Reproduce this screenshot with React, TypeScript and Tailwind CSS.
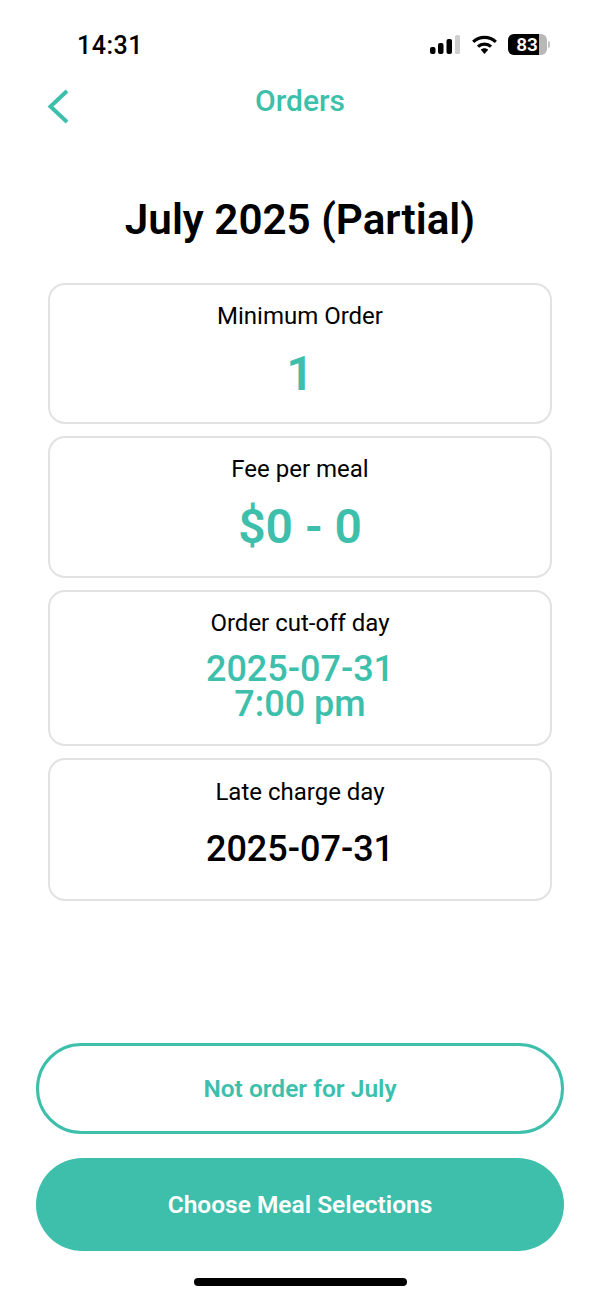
import React from 'react'

const TEAL = 'text-[#3dbfab]'

const Card = ({ label, children, className }: { label: string; children: React.ReactNode; className: string }) => (
    <div className={`w-full flex flex-col items-center rounded-[17px] border-2 border-[#e2e2e2] ${className}`}>
        <div className="text-[24px] leading-[28px] text-black">{label}</div>
        {children}
    </div>
)

const StatusIcons = () => (
    <div className="flex items-center">
        <svg width="30" height="19" viewBox="0 0 30 19">
            <rect x="0" y="12" width="5.5" height="7" rx="2" fill="#000" />
            <rect x="8" y="8" width="5.5" height="11" rx="2" fill="#000" />
            <rect x="16.5" y="4" width="5.5" height="15" rx="2" fill="#000" />
            <rect x="25" y="0" width="5" height="19" rx="1.5" fill="#cfcfcf" />
        </svg>
        <svg className="ml-[12px]" width="25" height="19" viewBox="0 0 25 19" fill="none">
            <path d="M1.2 6.8C7.5 0.9 17.5 0.9 23.8 6.8" stroke="#000" strokeWidth="3.2" />
            <path d="M6 11.6C9.5 8.4 15.5 8.4 19 11.6" stroke="#000" strokeWidth="3.2" />
            <path d="M8.8 14.8L12.5 19L16.2 14.8C14 12.8 11 12.8 8.8 14.8Z" fill="#000" />
        </svg>
        <div className="ml-[11px] flex items-center">
            <div className="w-[39px] h-[21px] rounded-[6px] bg-[#b8b8b8] overflow-hidden">
                <div className="w-[31px] h-full bg-black flex items-center justify-center pl-[7px]">
                    <span className="text-[19px] leading-none font-semibold text-white">83</span>
                </div>
            </div>
            <div className="ml-[1px] w-[2px] h-[7px] rounded-r-[2px] bg-[#c4c4c4]" />
        </div>
    </div>
)

const App = () => {
    return (
        <div className="w-[600px] h-[1299px] bg-white flex flex-col font-['Roboto',sans-serif] overflow-hidden">
            {/* status bar */}
            <div className="h-[72px] pt-[30px] pl-[77px] pr-[50px] flex items-start justify-between">
                <div className="text-[25px] leading-[32px] font-medium text-black tracking-[0.5px]">14:31</div>
                <div className="pt-[4px]"><StatusIcons /></div>
            </div>

            {/* header */}
            <div className="relative h-[58px] flex items-center justify-center">
                <svg className="absolute left-[46px] top-[16px]" width="24" height="36" viewBox="0 0 24 36" fill="none">
                    <path d="M21 3L4.5 18.5L21 34" stroke="#3dbfab" strokeWidth="4" />
                </svg>
                <div className={`text-[30px] leading-[36px] font-medium ${TEAL}`}>Orders</div>
            </div>

            <div className="mt-[64px] text-center text-[42.2px] leading-[52px] font-semibold text-black">July 2025 (Partial)</div>

            {/* cards */}
            <div className="mt-[37px] px-[48px] flex flex-col gap-[12px]">
                <Card label="Minimum Order" className="h-[141px] pt-[17px]">
                    <div className={`mt-[16px] text-[48px] leading-[56px] font-semibold ${TEAL}`}>1</div>
                </Card>
                <Card label="Fee per meal" className="h-[141.5px] pt-[17px]">
                    <div className={`mt-[16px] text-[48px] leading-[56px] font-semibold ${TEAL}`}>$0 - 0</div>
                </Card>
                <Card label="Order cut-off day" className="h-[156.5px] pt-[17px]">
                    <div className={`mt-[15px] text-[36px] leading-[35px] font-medium text-center ${TEAL}`}>
                        2025-07-31<br />7:00 pm
                    </div>
                </Card>
                <Card label="Late charge day" className="h-[143px] pt-[18px]">
                    <div className="mt-[21px] text-[36px] leading-[44px] font-medium text-black">2025-07-31</div>
                </Card>
            </div>

            {/* actions */}
            <div className="mt-auto px-[36px] flex flex-col">
                <button className={`h-[91px] pt-[2px] rounded-full border-[3px] border-[#3dbfab] bg-white text-[24.5px] font-semibold ${TEAL}`}>
                    Not order for July
                </button>
                <button className="mt-[24px] h-[93px] pt-[2px] rounded-full bg-[#3dbfab] text-[24.5px] font-semibold text-white">
                    Choose Meal Selections
                </button>
            </div>

            <div className="mt-[27px] mb-[13px] mx-auto w-[213px] h-[8px] rounded-full bg-black" />
        </div>
    )
}

export default App
